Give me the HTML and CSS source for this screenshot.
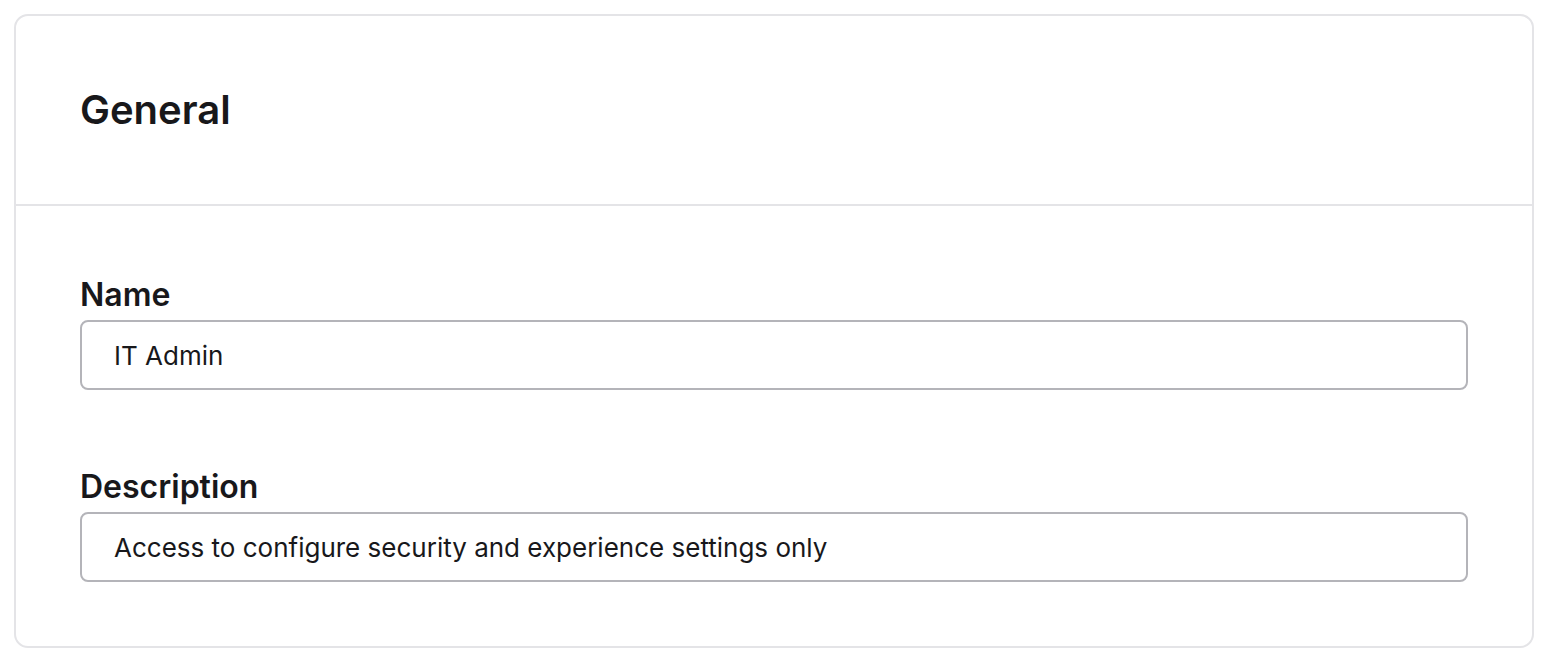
FILE: index.html
```html
<!DOCTYPE html>
<html lang="en">
<head>
<meta charset="utf-8">
<title>General</title>
<link rel="stylesheet" href="styles.css">
</head>
<body>
<div class="page">
  <section class="card">
    <header class="card-header">
      <h1 class="card-title">General</h1>
    </header>
    <div class="card-body">
      <div class="field">
        <label class="field-label" for="name">Name</label>
        <input class="field-input" id="name" type="text" value="IT Admin">
      </div>
      <div class="field">
        <label class="field-label" for="desc">Description</label>
        <input class="field-input" id="desc" type="text" value="Access to configure security and experience settings only">
      </div>
    </div>
  </section>
</div>
</body>
</html>
```

FILE: styles.css
```css
* { box-sizing: border-box; }
html, body { margin: 0; padding: 0; background: #ffffff; }
body {
  font-family: Inter, "Noto Sans", "Liberation Sans", sans-serif;
  color: #18181b;
}
.page {
  padding: 14px 18px 14px 14px;
}
.card {
  border: 2px solid #e4e4e7;
  border-radius: 14px;
  background: #ffffff;
}
.card-header {
  padding: 64px 64px;
  border-bottom: 2px solid #e4e4e7;
}
.card-title {
  margin: 0;
  font-size: 40px;
  line-height: 60px;
  font-weight: 600;
  color: #18181b;
}
.card-body {
  padding: 64px 64px;
  display: flex;
  flex-direction: column;
  gap: 72px;
}
.field {
  display: flex;
  flex-direction: column;
}
.field-label {
  font-size: 32px;
  line-height: 50px;
  font-weight: 600;
  color: #18181b;
}
.field-input {
  height: 70px;
  border: 2px solid #b4b4b9;
  border-radius: 8px;
  padding: 0 32px;
  font-family: inherit;
  font-size: 26px;
  color: #18181b;
  background: #ffffff;
  outline: none;
}
```
